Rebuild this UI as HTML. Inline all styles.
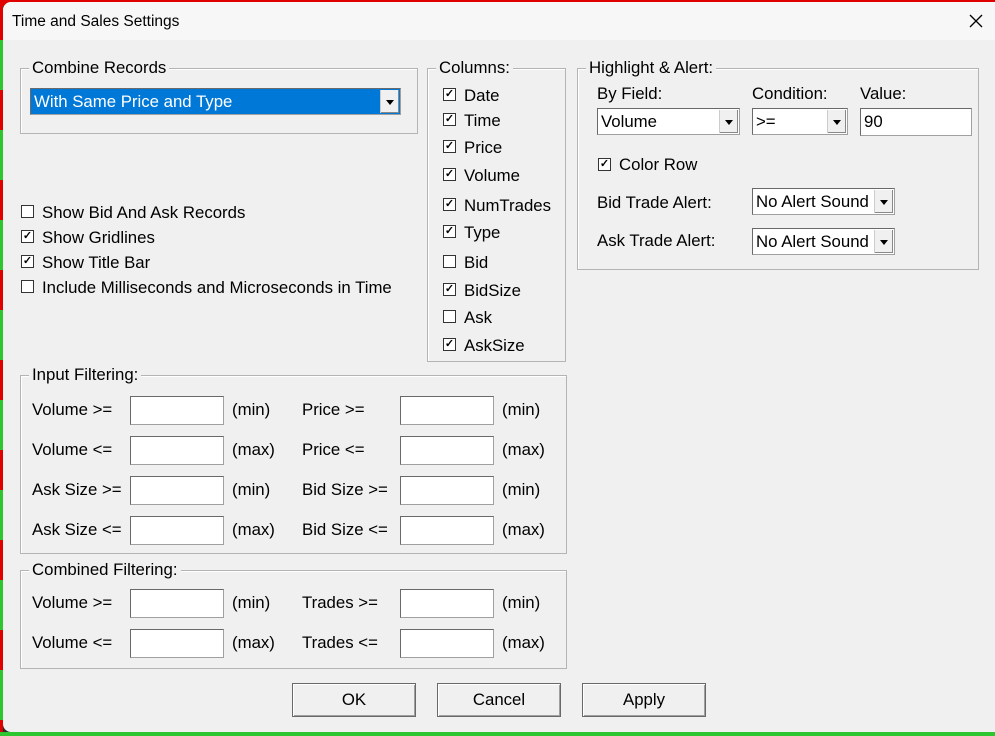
<!DOCTYPE html>
<html><head><style>
body{margin:0;width:995px;height:736px;overflow:hidden;background:#2a2a2a;font-family:"Liberation Sans",Arial,sans-serif;font-size:16.8px;color:#000;position:relative}
.a{position:absolute;white-space:nowrap;line-height:20px}
.dlg{position:absolute;left:3px;top:2px;width:992px;height:730px;background:#f0f0f0;border-radius:8px 0 0 8px}
.tb{position:absolute;left:3px;top:2px;width:992px;height:38px;background:#f7f7f7;border-radius:8px 0 0 0}
.g{position:absolute;border:1px solid #b4b4b4;box-shadow:inset 1px 1px 0 #fff}
.lg{position:absolute;top:-10px;left:8px;background:#f0f0f0;padding:0 3px;line-height:18px}
.cb{position:absolute;width:11px;height:11px;border:1px solid #333;background:#fff;font-size:11px;line-height:11px;text-align:center;font-weight:bold}
.in{position:absolute;background:#fff;border:1px solid #a0a0a0;border-top-color:#696969;border-left-color:#696969;box-sizing:border-box}
.sel{position:absolute;background:#fff;border:1px solid #a0a0a0;border-top-color:#696969;border-left-color:#696969;box-sizing:border-box;padding-left:3px;line-height:25px}
.arr{position:absolute;right:1px;top:1px;bottom:1px;width:18px;background:#f0f0f0;border-left:1px solid #ccc;box-shadow:inset -1px -1px 0 #888}
.arr:after{content:"";position:absolute;left:5px;top:50%;margin-top:-2px;border-left:4px solid transparent;border-right:4px solid transparent;border-top:5px solid #000}
.btn{position:absolute;width:124px;height:34px;box-sizing:border-box;border:1px solid #696969;box-shadow:inset 1px 1px 0 #fff,inset -1px -1px 0 #a0a0a0;background:#f0f0f0;text-align:center;line-height:32px}
</style></head><body>
<div class="a" style="left:0;top:0;width:995px;height:6px;background:#e00000"></div>
<div class="a" style="left:0;top:0;width:3px;height:736px;background:repeating-linear-gradient(#e00000 0 40px,#2ec62e 40px 90px)"></div>
<div class="a" style="left:0;top:732px;width:995px;height:4px;background:#2ec62e"></div>
<div class="dlg"></div><div class="tb"></div>
<div class="a" style="left:12px;top:12px;font-size:15.5px">Time and Sales Settings</div>
<svg class="a" style="left:969px;top:14px" width="14" height="14"><path d="M1 1L13 13M13 1L1 13" stroke="#000" stroke-width="1.3"/></svg>

<div class="g" style="left:20px;top:68px;width:396px;height:64px"><div class="lg">Combine Records</div></div>
<div class="sel" style="left:30px;top:88px;width:371px;height:27px;background:#0078d7;color:#fff;line-height:26px">With Same Price and Type<div class="arr"></div></div>

<div class="cb" style="left:21px;top:205px"></div><div class="a" style="left:42px;top:203px">Show Bid And Ask Records</div>
<div class="cb" style="left:21px;top:230px">✓</div><div class="a" style="left:42px;top:228px">Show Gridlines</div>
<div class="cb" style="left:21px;top:255px">✓</div><div class="a" style="left:42px;top:253px">Show Title Bar</div>
<div class="cb" style="left:21px;top:280px"></div><div class="a" style="left:42px;top:278px">Include Milliseconds and Microseconds in Time</div>

<div class="g" style="left:427px;top:68px;width:137px;height:292px"><div class="lg">Columns:</div></div>
<div class="cb" style="left:443px;top:88px">✓</div><div class="a" style="left:464px;top:86px">Date</div>
<div class="cb" style="left:443px;top:113px">✓</div><div class="a" style="left:464px;top:111px">Time</div>
<div class="cb" style="left:443px;top:140px">✓</div><div class="a" style="left:464px;top:138px">Price</div>
<div class="cb" style="left:443px;top:168px">✓</div><div class="a" style="left:464px;top:166px">Volume</div>
<div class="cb" style="left:443px;top:198px">✓</div><div class="a" style="left:464px;top:196px">NumTrades</div>
<div class="cb" style="left:443px;top:225px">✓</div><div class="a" style="left:464px;top:223px">Type</div>
<div class="cb" style="left:443px;top:255px"></div><div class="a" style="left:464px;top:253px">Bid</div>
<div class="cb" style="left:443px;top:283px">✓</div><div class="a" style="left:464px;top:281px">BidSize</div>
<div class="cb" style="left:443px;top:310px"></div><div class="a" style="left:464px;top:308px">Ask</div>
<div class="cb" style="left:443px;top:338px">✓</div><div class="a" style="left:464px;top:336px">AskSize</div>

<div class="g" style="left:577px;top:68px;width:400px;height:200px"><div class="lg">Highlight &amp; Alert:</div></div>
<div class="a" style="left:597px;top:84px">By Field:</div>
<div class="a" style="left:752px;top:84px">Condition:</div>
<div class="a" style="left:860px;top:84px">Value:</div>
<div class="sel" style="left:597px;top:108px;width:143px;height:27px">Volume<div class="arr"></div></div>
<div class="sel" style="left:752px;top:108px;width:96px;height:27px">&gt;=<div class="arr"></div></div>
<div class="sel" style="left:860px;top:108px;width:112px;height:28px">90</div>
<div class="cb" style="left:598px;top:158px">✓</div><div class="a" style="left:619px;top:155px">Color Row</div>
<div class="a" style="left:597px;top:193px">Bid Trade Alert:</div>
<div class="a" style="left:597px;top:231px">Ask Trade Alert:</div>
<div class="sel" style="left:752px;top:188px;width:143px;height:27px">No Alert Sound<div class="arr"></div></div>
<div class="sel" style="left:752px;top:228px;width:143px;height:27px">No Alert Sound<div class="arr"></div></div>

<div class="g" style="left:20px;top:375px;width:545px;height:177px"><div class="lg">Input Filtering:</div></div>
<div class="a" style="left:32px;top:400px">Volume &gt;=</div><div class="in" style="left:130px;top:396px;width:94px;height:29px"></div><div class="a" style="left:232px;top:400px">(min)</div>
<div class="a" style="left:302px;top:400px">Price &gt;=</div><div class="in" style="left:400px;top:396px;width:94px;height:29px"></div><div class="a" style="left:502px;top:400px">(min)</div>
<div class="a" style="left:32px;top:440px">Volume &lt;=</div><div class="in" style="left:130px;top:436px;width:94px;height:29px"></div><div class="a" style="left:232px;top:440px">(max)</div>
<div class="a" style="left:302px;top:440px">Price &lt;=</div><div class="in" style="left:400px;top:436px;width:94px;height:29px"></div><div class="a" style="left:502px;top:440px">(max)</div>
<div class="a" style="left:32px;top:480px">Ask Size &gt;=</div><div class="in" style="left:130px;top:476px;width:94px;height:29px"></div><div class="a" style="left:232px;top:480px">(min)</div>
<div class="a" style="left:302px;top:480px">Bid Size &gt;=</div><div class="in" style="left:400px;top:476px;width:94px;height:29px"></div><div class="a" style="left:502px;top:480px">(min)</div>
<div class="a" style="left:32px;top:520px">Ask Size &lt;=</div><div class="in" style="left:130px;top:516px;width:94px;height:29px"></div><div class="a" style="left:232px;top:520px">(max)</div>
<div class="a" style="left:302px;top:520px">Bid Size &lt;=</div><div class="in" style="left:400px;top:516px;width:94px;height:29px"></div><div class="a" style="left:502px;top:520px">(max)</div>

<div class="g" style="left:20px;top:570px;width:545px;height:97px"><div class="lg">Combined Filtering:</div></div>
<div class="a" style="left:32px;top:593px">Volume &gt;=</div><div class="in" style="left:130px;top:589px;width:94px;height:29px"></div><div class="a" style="left:232px;top:593px">(min)</div>
<div class="a" style="left:302px;top:593px">Trades &gt;=</div><div class="in" style="left:400px;top:589px;width:94px;height:29px"></div><div class="a" style="left:502px;top:593px">(min)</div>
<div class="a" style="left:32px;top:633px">Volume &lt;=</div><div class="in" style="left:130px;top:629px;width:94px;height:29px"></div><div class="a" style="left:232px;top:633px">(max)</div>
<div class="a" style="left:302px;top:633px">Trades &lt;=</div><div class="in" style="left:400px;top:629px;width:94px;height:29px"></div><div class="a" style="left:502px;top:633px">(max)</div>

<div class="btn" style="left:292px;top:683px">OK</div>
<div class="btn" style="left:437px;top:683px">Cancel</div>
<div class="btn" style="left:582px;top:683px">Apply</div>
</body></html>
